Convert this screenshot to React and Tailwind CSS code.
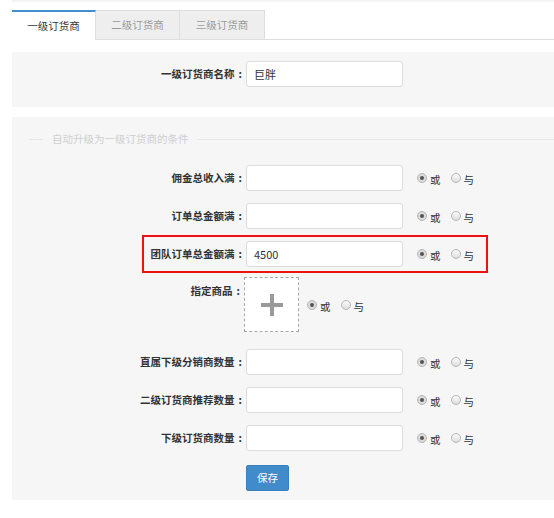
import React from 'react';

const font = { fontFamily: '"Noto Sans CJK SC", "Liberation Sans", sans-serif' };

function Radio({ checked, label, first }) {
    return (
        <div className={`flex items-center ${first ? '' : 'ml-[10px]'}`}>
            <span
                className={`w-[10px] h-[10px] rounded-full border border-[#b5b5b5] flex items-center justify-center ${
                    checked ? 'bg-[#dcdcdc]' : 'bg-gradient-to-b from-[#fafafa] to-[#dedede]'
                }`}
            >
                {checked && <span className="w-[4px] h-[4px] rounded-full bg-[#555]" />}
            </span>
            <span className="ml-[3px] mt-[5px] text-[10.5px] leading-none text-[#333]">{label}</span>
        </div>
    );
}

function Radios({ ml = 'ml-[14px]' }) {
    return (
        <div className={`flex items-center ${ml}`}>
            <Radio checked label="或" first />
            <Radio label="与" />
        </div>
    );
}

function Input({ value }) {
    return (
        <div className="w-[157px] h-[26px] bg-white border border-[#dcdcdc] rounded-[3px] flex items-center pl-[7px] text-[11px] text-[#333]">
            {value}
        </div>
    );
}

// label text + separated colon, right aligned against the field
function Label({ text, w = 'w-[234px]', extra = '' }) {
    return (
        <div className={`${w} ${extra} text-right text-[10.5px] font-bold text-[#333]`}>
            {text}
            <span className="ml-[4px] mr-[4px]">:</span>
        </div>
    );
}

function Row({ label, value }) {
    return (
        <div className="flex items-center h-[38px]">
            <Label text={label} />
            <Input value={value} />
            <Radios />
        </div>
    );
}

export default function App() {
    return (
        <div className="w-[554px] h-[518px] bg-white pl-[12px] overflow-hidden" style={font}>
            {/* top strip */}
            <div className="h-[2px] bg-[#f4f4f4]" />

            {/* tabs */}
            <div className="mt-[8px] flex items-start h-[30px] border-b border-[#dedede]">
                <div className="w-[84px] h-[30px] bg-white border-t-2 border-t-[#3f8fd2] border-r border-r-[#dedede] flex items-center justify-center text-[10.5px] text-[#333]">
                    一级订货商
                </div>
                <div className="w-[84px] h-[29px] bg-[#eeeeee] border-t border-r border-[#dedede] flex items-center justify-center text-[10.5px] text-[#999]">
                    二级订货商
                </div>
                <div className="w-[85px] h-[29px] bg-[#eeeeee] border-t border-r border-[#dedede] flex items-center justify-center text-[10.5px] text-[#999]">
                    三级订货商
                </div>
            </div>

            {/* name panel */}
            <div className="mt-[12px] h-[55px] bg-[#f6f6f6] pt-[9px]">
                <div className="flex items-center">
                    <Label text="一级订货商名称" />
                    <Input value="巨胖" />
                </div>
            </div>

            {/* conditions panel */}
            <div className="mt-[10px] h-[383px] bg-[#f6f6f6] pt-[14px]">
                <div className="flex items-center h-[16px] pl-[17px]">
                    <div className="w-[14px] h-px bg-[#e6e6e6]" />
                    <span className="ml-[9px] text-[10.5px] text-[#cfcfcf]">自动升级为一级订货商的条件</span>
                    <div className="ml-[9px] flex-1 h-px bg-[#e6e6e6]" />
                </div>

                <div className="mt-[12px]">
                    <Row label="佣金总收入满" />
                    <Row label="订单总金额满" />

                    {/* highlighted row */}
                    <div className="ml-[130px] w-[346px] h-[38px] border-2 border-[#ee1111] flex items-center">
                        <Label text="团队订单总金额满" w="w-[102px]" />
                        <Input value="4500" />
                        <Radios />
                    </div>

                    {/* product picker */}
                    <div className="flex items-start pt-[4px] pb-[11px]">
                        <Label text="指定商品" w="w-[232px]" extra="pt-[6px]" />
                        <div className="w-[55px] h-[55px] border border-dashed border-[#a8a8a8] bg-white flex items-center justify-center">
                            <svg width="22" height="22" viewBox="0 0 22 22">
                                <rect x="9" y="0" width="4" height="22" fill="#9a9a9a" />
                                <rect x="0" y="9" width="22" height="4" fill="#9a9a9a" />
                            </svg>
                        </div>
                        <div className="self-center">
                            <Radios ml="ml-[8px]" />
                        </div>
                    </div>

                    <Row label="直属下级分销商数量" />
                    <Row label="二级订货商推荐数量" />
                    <Row label="下级订货商数量" />

                    <div className="pl-[234px] mt-[6px]">
                        <button className="w-[43px] h-[26px] bg-[#428bca] border border-[#3a7fbd] rounded-[2px] text-white text-[10.5px]">
                            保存
                        </button>
                    </div>
                </div>
            </div>
        </div>
    );
}
